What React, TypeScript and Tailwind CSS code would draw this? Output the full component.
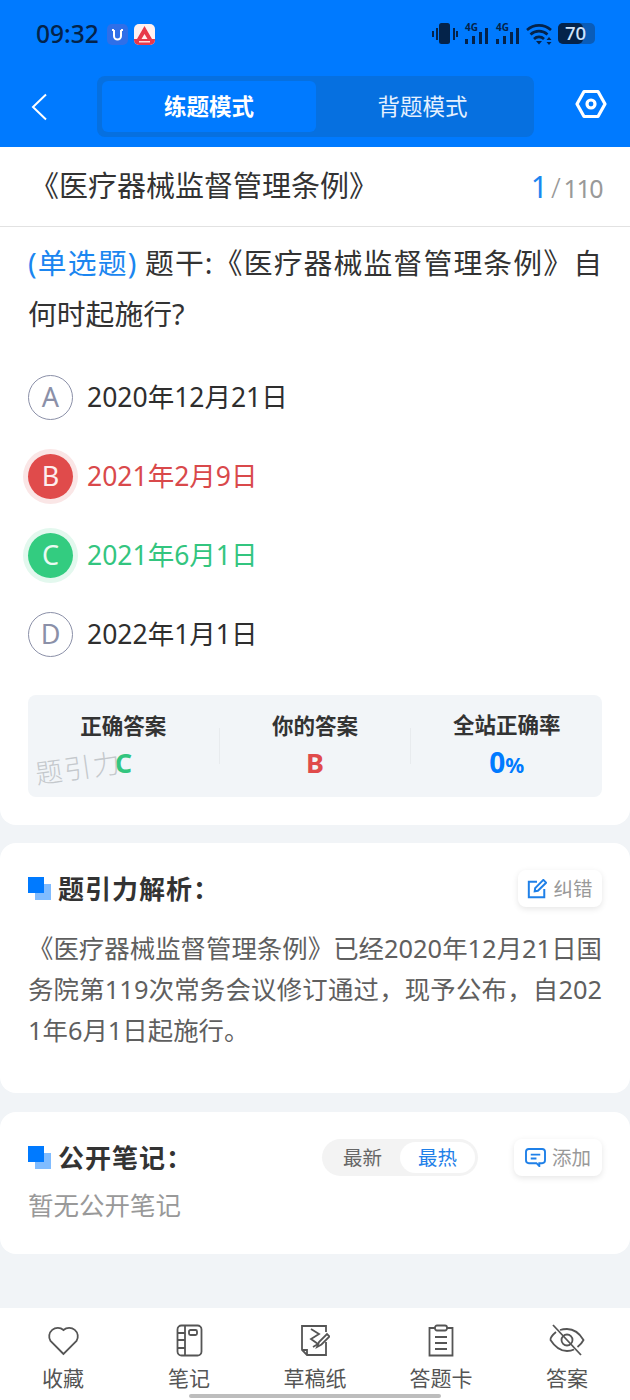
const font = "font-['Noto_Sans','Noto_Sans_CJK_SC',sans-serif] [text-spacing-trim:space-all]";

function StatusBars({ x }: { x: number }) {
  return (
    <g transform={`translate(${x} 0)`}>
      <text x="1" y="9" fontSize="10" fontWeight="700" fill="#04234a">4G</text>
      <rect x="1" y="17" width="3" height="5" fill="#04234a" />
      <rect x="8" y="14" width="3" height="8" fill="#04234a" />
      <rect x="15" y="10" width="3" height="12" fill="#04234a" />
      <rect x="21" y="6" width="3" height="16" fill="#04234a" />
    </g>
  );
}

function StatusBar() {
  return (
    <div className="flex h-[68px] items-center justify-between pr-[34px] pl-9">
      <div className="flex items-center">
        <span className="text-[24.5px] leading-none font-medium text-[#04234a]">09:32</span>
        <div className="ml-[8px] flex h-[21px] w-[21px] items-center justify-center rounded-[5px] bg-[#2f6fe8]">
          <svg width="13" height="13" viewBox="0 0 13 13" fill="none" stroke="#fff" strokeWidth="2">
            <path d="M1 2h2M10 2h2M3 2v6a3.500 3.500 0 0 0 7 0V2" />
          </svg>
        </div>
        <div className="ml-[6px] h-[21px] w-[21px] overflow-hidden rounded-[5px] bg-[#fff1f1]">
          <svg width="21" height="21" viewBox="0 0 21 21">
            <path d="M10.500 2 L18 15 H13.500 L10.500 10 L7.500 15 H3 Z" fill="#e8394a" />
            <rect x="0" y="15" width="21" height="6" fill="#e8394a" />
            <rect x="5" y="17" width="11" height="1.500" fill="#ffd9d9" />
          </svg>
        </div>
      </div>
      <svg width="164" height="24" viewBox="0 0 164 24" fill="none" className="overflow-visible">
        <g fill="#04234a">
          <rect x="0" y="9" width="2" height="6" />
          <rect x="4" y="6" width="2" height="12" />
          <rect x="7" y="1" width="11" height="21" rx="2.500" />
          <rect x="21" y="6" width="2" height="12" />
          <rect x="24" y="9" width="2" height="6" />
        </g>
        <StatusBars x={32} />
        <StatusBars x={63} />
        <path d="M95 8a18 18 0 0 1 24 0M98.500 12.500a12.500 12.500 0 0 1 17 0M102 17a7 7 0 0 1 10 0" stroke="#04234a" strokeWidth="2.600" />
        <path d="M104 19h6l-3 3.500z" fill="#04234a" />
        <path d="M117 15l2.500 3h-5zM117 23l2.500-3h-5z" fill="#04234a" />
        <rect x="126" y="1" width="37" height="21" rx="5" fill="#0a5cb8" />
        <rect x="126" y="1" width="25" height="21" rx="5" fill="#04234a" />
        <text x="133" y="18" fontSize="18.500" fontWeight="500" fill="#cfe4fb">70</text>
      </svg>
    </div>
  );
}

function Header() {
  return (
    <div className="bg-[#007aff]">
      <StatusBar />
      <div className="flex h-[79px] items-start">
        <div className="flex w-[96px] justify-start pt-[25px] pl-[31px]">
          <svg width="17" height="28" viewBox="0 0 17 28" fill="none" stroke="#fff" strokeWidth="2">
            <path d="M15 1.500 2 14l13 12.500" />
          </svg>
        </div>
        <div className="mt-2 ml-px flex h-[61px] w-[437px] rounded-lg bg-[#0670e0] p-[5px]">
          <div className="flex w-[214px] items-center justify-center rounded-md bg-[#007aff] text-[22.5px] font-bold text-white">
            练题模式
          </div>
          <div className="flex flex-1 items-center justify-center text-[22.5px] text-[#e4f0ff]">背题模式</div>
        </div>
        <div className="flex flex-1 justify-center pt-[21px] pl-[18px]">
          <svg width="32" height="30" viewBox="0 0 32 30" fill="none" stroke="#fff" strokeWidth="3.200">
            <path d="M9 2.500h14L30 15l-7 12.500H9L2 15z" strokeLinejoin="round" />
            <circle cx="16" cy="15" r="4" />
          </svg>
        </div>
      </div>
    </div>
  );
}

function Option({ letter, text, state }: { letter: string; text: string; state?: "wrong" | "right" }) {
  const circle =
    state === "wrong"
      ? "bg-[#e04b4b] text-[#fdeeee] ring-[5px] ring-[#fae6e6]"
      : state === "right"
        ? "bg-[#33cc80] text-[#eafaf2] ring-[5px] ring-[#e3f8ee]"
        : "border border-[#8b90a8] text-[#8b90a8]";
  const color = state === "wrong" ? "text-[#d9494b]" : state === "right" ? "text-[#33c57f]" : "text-[#2e2e2e]";
  return (
    <div className="flex h-[45px] items-center">
      <div className={`flex h-[45px] w-[45px] shrink-0 items-center justify-center rounded-full text-[27px] ${circle}`}>
        {letter}
      </div>
      <span className={`ml-[14px] text-[26.5px] leading-none ${color}`}>{text}</span>
    </div>
  );
}

function Stat({ label, children }: { label: string; children: React.ReactNode }) {
  return (
    <div className="flex flex-1 flex-col items-center">
      <span className="text-[21.5px] leading-[28px] font-bold text-[#333]">{label}</span>
      <div className="mt-[6px]">{children}</div>
    </div>
  );
}

function SectionTitle({ text }: { text: string }) {
  return (
    <div className="flex items-center">
      <div className="relative h-[23px] w-[23px]">
        <div className="absolute right-0 bottom-0 h-4 w-4 bg-[#80bcff]" />
        <div className="absolute top-0 left-0 h-4 w-4 bg-[#007aff]" />
      </div>
      <span className="ml-[7px] text-[26px] leading-none font-bold tracking-[1px] text-[#333]">{text}</span>
    </div>
  );
}

function ChipButton({ icon, label, width }: { icon: React.ReactNode; label: string; width: string }) {
  return (
    <div className={`flex h-[37px] items-center justify-center gap-[6px] rounded-lg bg-white text-[19.5px] text-[#999] shadow-[0_2px_6px_rgba(0,0,0,0.10)] ${width}`}>
      {icon}
      {label}
    </div>
  );
}

function NavItem({ icon, label }: { icon: React.ReactNode; label: string }) {
  return (
    <div className="flex flex-col items-center">
      <div className="flex h-[34px] w-[40px] items-center justify-center">{icon}</div>
      <span className="mt-[6px] text-[21px] leading-[30px] text-[#555]">{label}</span>
    </div>
  );
}

const navStroke = { fill: "none", stroke: "#555", strokeWidth: 1.800 };

export default function App() {
  return (
    <div className={`relative flex h-[1400px] w-[630px] flex-col overflow-hidden bg-[#f1f4f7] ${font}`}>
      <Header />
      <div className="rounded-b-2xl bg-white">
        <div className="flex h-[80px] items-center justify-between border-b border-[#e2e2e2] pr-[28px] pl-[30px]">
          <span className="mb-[2px] text-[29px] leading-none text-[#333]">《医疗器械监督管理条例》</span>
          <span className="flex items-baseline text-[#999]">
            <span className="text-[30px] leading-none text-[#1b86f0]">1</span>
            <span className="ml-[3px] text-[28px] leading-none font-light">/</span>
            <span className="ml-[3px] text-[25px] leading-none tracking-[-1.500px]">110</span>
          </span>
        </div>
        <div className="px-7 pt-[10px] text-justify text-[28.8px] leading-[51px] text-[#333]">
          <span className="text-[#1b86f0]">(单选题)</span> 题干:《医疗器械监督管理条例》自何时起施行?
        </div>
        <div className="mt-[36px] flex flex-col gap-[34px] px-7">
          <Option letter="A" text="2020年12月21日" />
          <Option letter="B" text="2021年2月9日" state="wrong" />
          <Option letter="C" text="2021年6月1日" state="right" />
          <Option letter="D" text="2022年1月1日" />
        </div>
        <div className="relative mx-7 mt-[38px] flex h-[102px] items-center rounded-lg bg-[#f2f5f8]">
          <Stat label="正确答案">
            <span className="text-[27px] leading-[34px] font-bold text-[#33c57f]">C</span>
          </Stat>
          <div className="h-9 w-px bg-[#e8ebee]" />
          <Stat label="你的答案">
            <span className="text-[27px] leading-[34px] font-bold text-[#e04b4b]">B</span>
          </Stat>
          <div className="h-9 w-px bg-[#e8ebee]" />
          <Stat label="全站正确率">
            <span className="text-[28px] leading-[34px] font-bold text-[#007aff]">
              0<span className="text-[21px]">%</span>
            </span>
          </Stat>
          <span className="absolute top-[59px] left-[7px] -rotate-[8deg] text-[27px] leading-none font-light tracking-[2px] text-[#c4c8cc]">
            题引力
          </span>
        </div>
        <div className="h-7" />
      </div>

      <div className="mt-[18px] h-[250px] rounded-2xl bg-white px-7 pt-[27px]">
        <div className="flex items-center justify-between">
          <SectionTitle text="题引力解析：" />
          <ChipButton
            label="纠错"
            width="w-[84px]"
            icon={
              <svg width="20" height="20" viewBox="0 0 22 22" fill="none" stroke="#1f80e8" strokeWidth="2.200">
                <path d="M11 3H2v17h17v-9M9 10l9-9 3 3-9 9-3.500.5z" />
              </svg>
            }
          />
        </div>
        <p className="mt-[21px] text-justify text-[25.4px] leading-[41px] break-all text-[#5f5f5f]">
          《医疗器械监督管理条例》已经2020年12月21日国务院第119次常务会议修订通过，现予公布，自2021年6月1日起施行。
        </p>
      </div>

      <div className="mt-[19px] h-[142px] rounded-2xl bg-white px-7 pt-[27px]">
        <div className="flex items-center">
          <SectionTitle text="公开笔记：" />
          <div className="ml-auto flex h-[37px] w-[156px] items-center rounded-full bg-[#f3f3f3] p-[3px] text-[19.5px]">
            <span className="flex-1 text-center text-[#666]">最新</span>
            <span className="flex h-[31px] w-[75px] items-center justify-center rounded-full bg-white text-[#1f80e8]">
              最热
            </span>
          </div>
          <div className="ml-9">
            <ChipButton
              label="添加"
              width="w-[88px]"
              icon={
                <svg width="21" height="19" viewBox="0 0 22 20" fill="none" stroke="#1f80e8" strokeWidth="2">
                  <path d="M4 1h14a3 3 0 0 1 3 3v9a3 3 0 0 1-3 3h-3v3l-3-3H4a3 3 0 0 1-3-3V4a3 3 0 0 1 3-3zM6 7h10M6 11h6" />
                </svg>
              }
            />
          </div>
        </div>
        <p className="mt-[10px] text-[25.5px] leading-[38px] text-[#999]">暂无公开笔记</p>
      </div>

      <div className="absolute right-0 bottom-0 left-0 grid h-[92px] grid-cols-5 bg-white pt-[15px]">
        <NavItem
          label="收藏"
          icon={
            <svg width="33" height="31" viewBox="0 0 33 31" {...navStroke}>
              <path d="M16.500 29 3.500 16A8.600 8.600 0 0 1 16.500 5a8.600 8.600 0 0 1 13 11z" />
            </svg>
          }
        />
        <NavItem
          label="笔记"
          icon={
            <svg width="27" height="33" viewBox="0 0 27 33" {...navStroke}>
              <rect x="1.500" y="1.500" width="24" height="30" rx="4" />
              <path d="M9 1.500v30M1.500 9H9M1.500 16H9M1.500 24H9" />
              <rect x="13" y="6" width="8" height="5" rx="1.500" />
            </svg>
          }
        />
        <NavItem
          label="草稿纸"
          icon={
            <svg width="30" height="33" viewBox="0 0 30 33" {...navStroke}>
              <path d="M26 8V2H2v24l5 5h19V18M2 26h5v5" />
              <path d="M11 5l8 5-8 5 7 5-5 3" />
              <path d="M17 23l2-5 8-8 2.500 2.500-8 8z" />
            </svg>
          }
        />
        <NavItem
          label="答题卡"
          icon={
            <svg width="28" height="33" viewBox="0 0 28 33" {...navStroke}>
              <path d="M8 4H2.500v27.500h23V4H20" />
              <rect x="8" y="1.500" width="12" height="5" rx="2" />
              <path d="M8 13h12M8 19h12M8 25h12" />
            </svg>
          }
        />
        <NavItem
          label="答案"
          icon={
            <svg width="36" height="32" viewBox="0 0 36 32" {...navStroke}>
              <path d="M7 8Q1 13 1.500 16q7 11 16.500 11 4 0 7-1.500M11 6q3-1 7-1 10 0 16.500 11-2 4-6 7" />
              <circle cx="18" cy="16" r="5.500" />
              <path d="M4 1l28 30" />
            </svg>
          }
        />
      </div>
      <div className="absolute bottom-[2px] left-[189px] h-[4px] w-[252px] rounded-full bg-[#bdbdbd]" />
    </div>
  );
}
